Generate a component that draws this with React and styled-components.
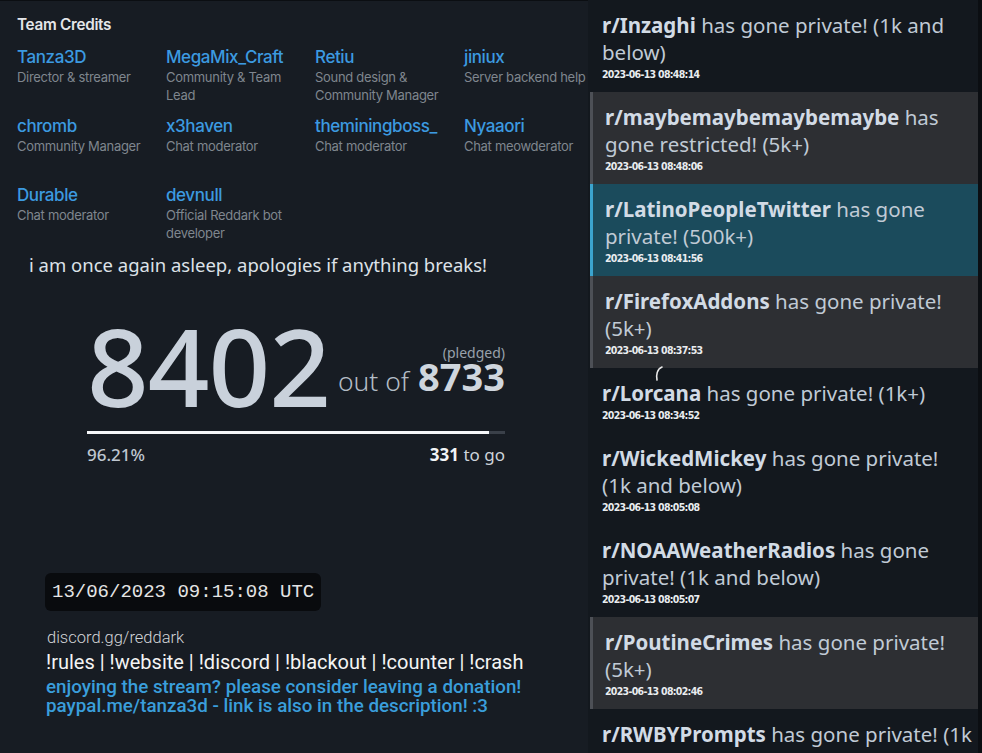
import styled, { createGlobalStyle } from 'styled-components';

const GlobalStyle = createGlobalStyle`
    html, body {
        margin: 0;
        padding: 0;
        background: #171c23;
    }
`

const team = [
    { name: 'Tanza3D', role: 'Director & streamer' },
    { name: 'MegaMix_Craft', role: 'Community & Team Lead' },
    { name: 'Retiu', role: 'Sound design & Community Manager' },
    { name: 'jiniux', role: 'Server backend help' },
    { name: 'chromb', role: 'Community Manager' },
    { name: 'x3haven', role: 'Chat moderator' },
    { name: 'theminingboss_', role: 'Chat moderator' },
    { name: 'Nyaaori', role: 'Chat meowderator' },
    { name: 'Durable', role: 'Chat moderator' },
    { name: 'devnull', role: 'Official Reddark bot developer' },
];

const feed = [
    { sub: 'Inzaghi', text: 'has gone private! (1k and below)', time: '2023-06-13 08:48:14' },
    { sub: 'maybemaybemaybemaybe', text: 'has gone restricted! (5k+)', time: '2023-06-13 08:48:06', kind: 'grey' },
    { sub: 'LatinoPeopleTwitter', text: 'has gone private! (500k+)', time: '2023-06-13 08:41:56', kind: 'teal' },
    { sub: 'FirefoxAddons', text: 'has gone private! (5k+)', time: '2023-06-13 08:37:53', kind: 'grey' },
    { sub: 'Lorcana', text: 'has gone private! (1k+)', time: '2023-06-13 08:34:52' },
    { sub: 'WickedMickey', text: 'has gone private! (1k and below)', time: '2023-06-13 08:05:08' },
    { sub: 'NOAAWeatherRadios', text: 'has gone private! (1k and below)', time: '2023-06-13 08:05:07' },
    { sub: 'PoutineCrimes', text: 'has gone private! (5k+)', time: '2023-06-13 08:02:46', kind: 'grey' },
    { sub: 'RWBYPrompts', text: 'has gone private! (1k and below)', time: '2023-06-13 08:01:30' },
];

const pledged = 8402;
const goal = 8733;

function App () {
    const percent = (pledged / goal) * 100;

    return (
        <Screen>
            <GlobalStyle />
            <LeftPanel>
                <Credits>
                    <CreditsTitle>Team Credits</CreditsTitle>
                    <CreditsGrid>
                        {team.map(member => (
                            <Member key={member.name}>
                                <MemberName>{member.name}</MemberName>
                                <MemberRole>{member.role}</MemberRole>
                            </Member>
                        ))}
                    </CreditsGrid>
                </Credits>

                <Notice>i am once again asleep, apologies if anything breaks!</Notice>

                <Counter>
                    <CounterTop>
                        <BigNumber>{pledged}</BigNumber>
                        <GoalColumn>
                            <Pledged>(pledged)</Pledged>
                            <GoalLine>
                                <OutOf>out of</OutOf>
                                <Goal>{goal}</Goal>
                            </GoalLine>
                        </GoalColumn>
                    </CounterTop>
                    <Bar>
                        <BarFill style={{ width: `${percent}%` }} />
                    </Bar>
                    <CounterBottom>
                        <span>{percent.toFixed(2)}%</span>
                        <ToGo><b>{goal - pledged}</b> to go</ToGo>
                    </CounterBottom>
                </Counter>

                <Footer>
                    <Clock>13/06/2023 09:15:08 UTC</Clock>
                    <Discord>discord.gg/reddark</Discord>
                    <Commands>!rules | !website | !discord | !blackout | !counter | !crash</Commands>
                    <Donate>
                        enjoying the stream? please consider leaving a donation!<br />
                        paypal.me/tanza3d - link is also in the description! :3
                    </Donate>
                </Footer>
            </LeftPanel>

            <Feed>
                {feed.map(item => (
                    <FeedItem key={item.sub} kind={item.kind}>
                        <FeedText><b>r/{item.sub}</b> {item.text}</FeedText>
                        <FeedTime>{item.time}</FeedTime>
                    </FeedItem>
                ))}
                <Spinner width="14" height="18" viewBox="0 0 14 18">
                    <path d="M9 2 C4 4, 3 10, 4 15" fill="none" stroke="#e8e8e8" strokeWidth="1.6" strokeLinecap="round" />
                </Spinner>
            </Feed>
        </Screen>
    )
}

export default App;

const Screen = styled.div`
    display: grid;
    grid-template-columns: 588px 1fr;
    height: 753px;
    overflow: hidden;
    background: #171c23;
`

const LeftPanel = styled.div`
    display: flex;
    flex-direction: column;
    min-width: 0;
    border-top: 1px solid #0b0e12;
`

const Credits = styled.section`
    padding: 15px 0 0 17px;
    font-family: Inter, "Noto Sans", sans-serif;
`

const CreditsTitle = styled.h2`
    margin: 0 0 12px;
    font-size: 15.3px;
    font-weight: 600;
    line-height: 18px;
    letter-spacing: -0.3px;
    color: #e4e6e9;
`

const CreditsGrid = styled.div`
    display: grid;
    grid-template-columns: repeat(4, 149px);
    grid-auto-rows: 56px;
    row-gap: 13px;
`

const Member = styled.div`
    display: flex;
    flex-direction: column;
`

const MemberName = styled.div`
    font-size: 17px;
    font-weight: 500;
    letter-spacing: -0.4px;
    line-height: 22px;
    color: #3c9ae0;
`

const MemberRole = styled.div`
    font-size: 13px;
    letter-spacing: -0.3px;
    line-height: 18px;
    color: #7f868e;
    padding-right: 6px;
`

const Notice = styled.p`
    margin: 12px 0 0 29px;
    font-family: "Noto Sans", "Open Sans", sans-serif;
    font-size: 18.5px;
    line-height: 26px;
    color: #dde2e8;
`

const Counter = styled.div`
    align-self: center;
    width: 418px;
    margin: 38px 0 0 4px;
    font-family: "Noto Sans", "Open Sans", sans-serif;
`

const CounterTop = styled.div`
    display: flex;
    justify-content: space-between;
    align-items: flex-end;
`

const BigNumber = styled.div`
    font-size: 108px;
    font-weight: 500;
    line-height: 100px;
    letter-spacing: -1px;
    color: #c9d1db;
`

const GoalColumn = styled.div`
    display: flex;
    flex-direction: column;
    align-items: flex-end;
    padding-bottom: 17px;
`

const Pledged = styled.div`
    font-size: 14px;
    line-height: 16px;
    margin-bottom: -3px;
    color: #98a1ab;
`

const GoalLine = styled.div`
    display: flex;
    align-items: baseline;
    gap: 9px;
    line-height: 36px;
`

const OutOf = styled.span`
    font-size: 26.5px;
    font-weight: 300;
    color: #b3bcc6;
`

const Goal = styled.span`
    font-size: 38px;
    font-weight: 700;
    color: #cfd6de;
`

const Bar = styled.div`
    height: 3px;
    margin-top: 15px;
    background: #3a4049;
`

const BarFill = styled.div`
    height: 100%;
    background: #f4f6f8;
`

const CounterBottom = styled.div`
    display: flex;
    justify-content: space-between;
    margin-top: 9px;
    font-size: 17px;
    line-height: 24px;
    font-weight: 500;
    color: #bfc7d0;
`

const ToGo = styled.span`
    font-weight: 400;
    color: #cdd3da;

    b {
        font-weight: 700;
        color: #f2f4f6;
    }
`

const Footer = styled.div`
    display: flex;
    flex-direction: column;
    align-items: flex-start;
    margin: 106px 0 0 45px;
    font-family: Roboto, "Liberation Sans", sans-serif;
`

const Clock = styled.div`
    padding: 0 7px;
    height: 38px;
    display: flex;
    align-items: center;
    border-radius: 6px;
    background: #090b0e;
    font-family: "Liberation Mono", "DejaVu Sans Mono", monospace;
    font-size: 19px;
    color: #e4e4e4;
`

const Discord = styled.div`
    margin: 15px 0 0 2px;
    font-size: 16.5px;
    font-weight: 300;
    line-height: 24px;
    color: #d3d5d8;
`

const Commands = styled.div`
    margin-left: 1px;
    font-size: 20px;
    line-height: 25px;
    color: #f4f4f4;
`

const Donate = styled.div`
    margin: 3px 0 0 1px;
    font-size: 18.8px;
    font-weight: 500;
    line-height: 19px;
    color: #3a9edb;
`

const Feed = styled.div`
    position: relative;
    overflow: hidden;
    background: #13181e;
    border-right: 4px solid #0b0e12;
    font-family: "Noto Sans", "Open Sans", sans-serif;
`

const FeedItem = styled.div`
    padding: 12px 6px 10px 14px;
    color: #c0cad5;

    ${props => props.kind && `
        margin-left: 2px;
        padding-left: 12px;
        border-left: 3px solid ${props.kind === 'teal' ? '#3ba4cf' : '#4d5056'};
        background: ${props.kind === 'teal' ? '#1b4b5c' : '#2d2f33'};
    `}
`

const FeedText = styled.div`
    font-size: 20.5px;
    line-height: 27px;

    b {
        font-weight: 700;
        color: #d2dbe5;
    }
`

const FeedTime = styled.div`
    font-family: "DejaVu Sans Condensed", "Liberation Sans Narrow", "Noto Sans", sans-serif;
    font-stretch: condensed;
    font-size: 10.5px;
    font-weight: 700;
    line-height: 16px;
    letter-spacing: -0.7px;
    color: #e9ecef;
`

const Spinner = styled.svg`
    position: absolute;
    left: 65px;
    top: 365px;
`
